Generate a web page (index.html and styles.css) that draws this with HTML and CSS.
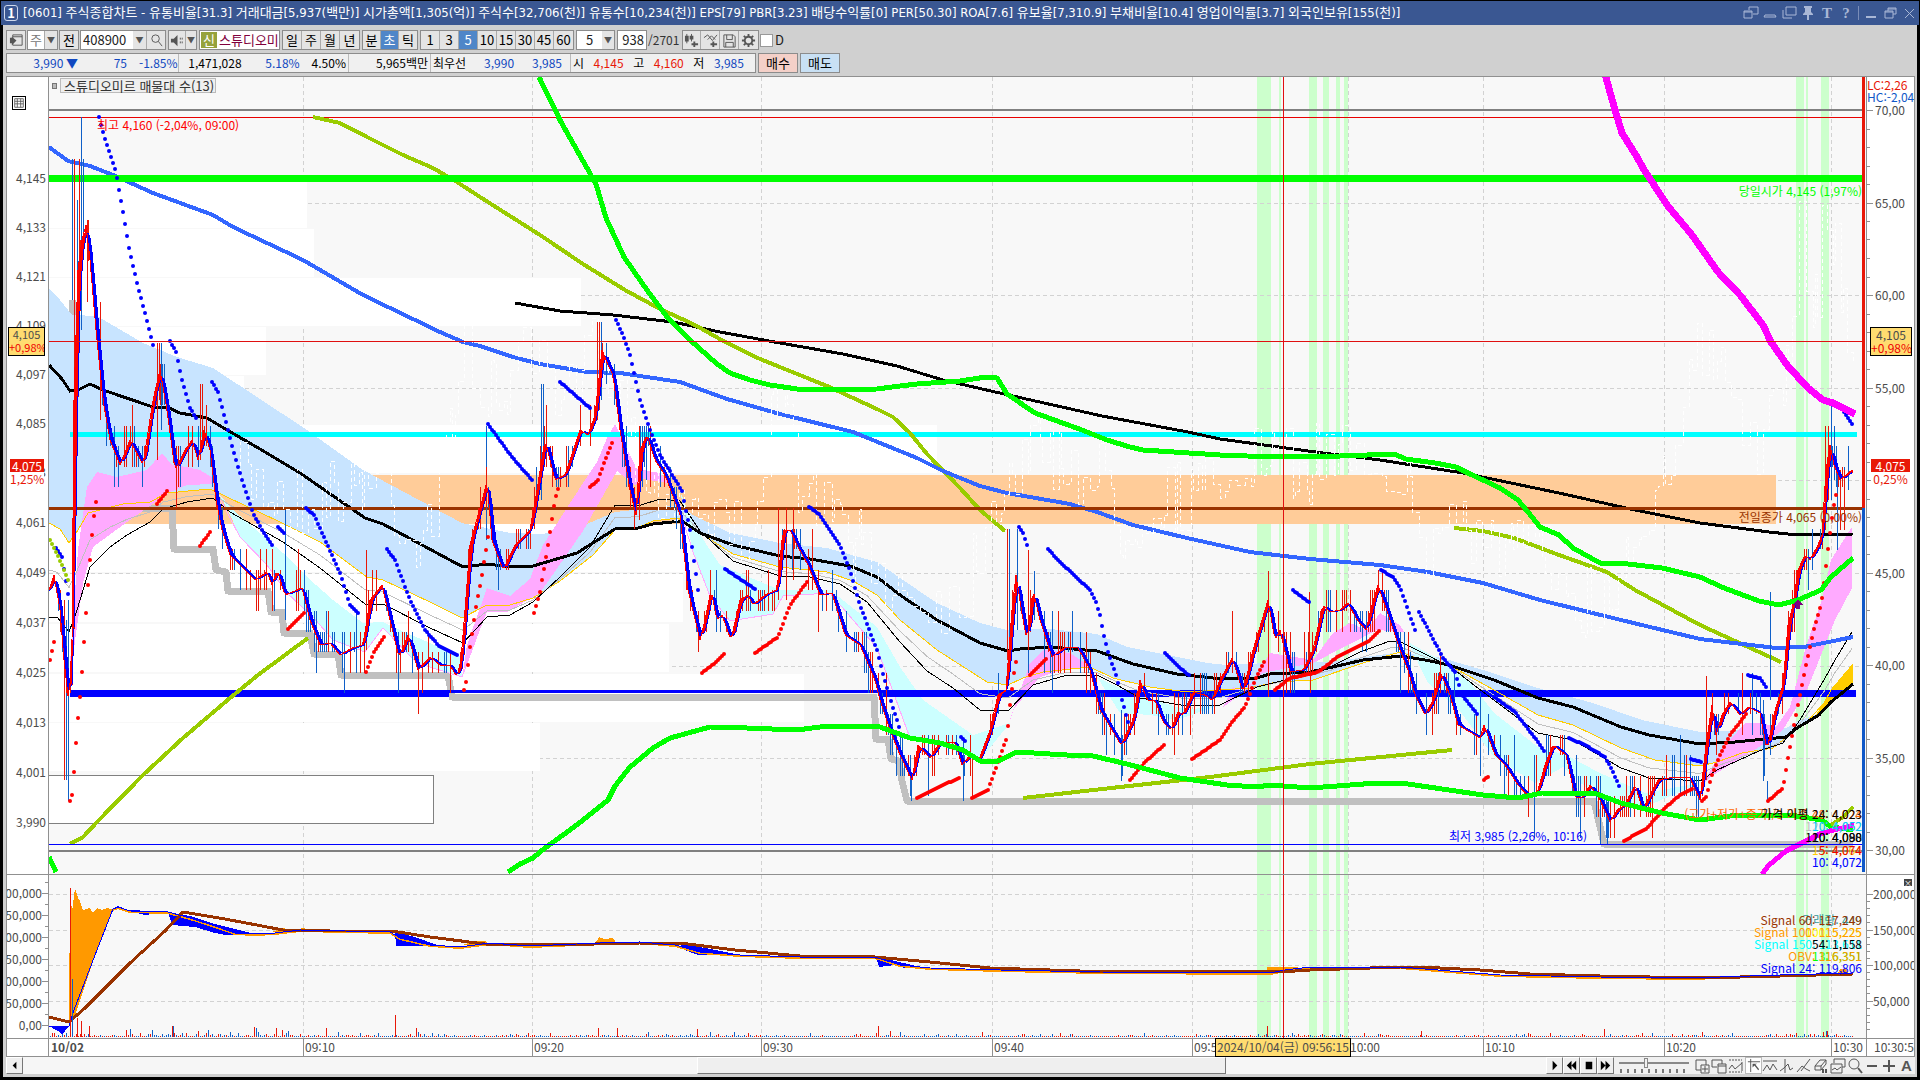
FILE: index.html
```html
<!DOCTYPE html>
<html lang="ko">
<head>
<meta charset="utf-8">
<title>[0601] 주식종합차트</title>
<link rel="stylesheet" href="styles.css">
</head>
<body>
<header class="titlebar">
  <span class="win-no">1</span>
  <h1 class="title">[0601] 주식종합차트 - 유통비율[31.3] 거래대금[5,937(백만)] 시가총액[1,305(억)] 주식수[32,706(천)] 유통수[10,234(천)] EPS[79] PBR[3.23] 배당수익률[0] PER[50.30] ROA[7.6] 유보율[7,310.9] 부채비율[10.4] 영업이익률[3.7] 외국인보유[155(천)]</h1>
  <div class="win-tools">
    <button aria-label="창 분리"><svg viewBox="0 0 16 14"><path d="M6 1h9v7h-5M6 1v3M1 5h8v7H1z M1 6h8"/></svg></button>
    <button aria-label="접기"><svg viewBox="0 0 16 14"><path d="M3 9h10l1 2H2z"/></svg></button>
    <button aria-label="복사"><svg viewBox="0 0 16 14"><path d="M5 1h10v8H5zM2 4v8h9"/></svg></button>
    <button aria-label="고정"><svg viewBox="0 0 16 14"><path class="solid" d="M4 0h8v2h-1v4l2 2v1H9v5H7V9H3V8l2-2V2H4z"/></svg></button>
    <button class="glyph">T</button>
    <button class="glyph">?</button>
    <i class="bar"></i>
    <button aria-label="최소화"><svg viewBox="0 0 16 14"><path class="solid" d="M3 10h10v2H3z"/></svg></button>
    <button aria-label="이전 크기"><svg viewBox="0 0 16 14"><path d="M6 2h8v6h-3M6 2v3M3 5h8v7H3zM3 6h8M6 3h8"/></svg></button>
    <button aria-label="닫기"><svg viewBox="0 0 16 14"><path d="M4 3l9 9M13 3l-9 9"/></svg></button>
  </div>
</header>

<main class="window">
  <div class="toolbar">
    <button class="tb w20" aria-label="목록"><svg viewBox="0 0 16 16"><path d="M4 2h10v11H4zM4 4h10"/><path class="solid" d="M1 5h2v6H1zM3 4l5 4-5 5z"/></svg></button>
    <div class="group"><span class="cell w17 white dim">주</span><button class="cell w12 tri" aria-label="종류">▼</button></div>
    <button class="tb w20">전</button>
    <div class="group"><input class="code" value="408900" aria-label="종목코드"><button class="cell w14 tri" aria-label="종목 목록">▼</button><button class="cell w18" aria-label="검색"><svg viewBox="0 0 16 16"><circle cx="7" cy="6" r="4"/><path d="M10 9l4 5"/></svg></button></div>
    <div class="group"><button class="cell w17" aria-label="소리"><svg viewBox="0 0 16 16"><path class="solid" d="M1 6h3l4-4v12L4 10H1z"/><path d="M11 5v2M11 9v2M13 5v2M13 9v2"/></svg></button><button class="cell w10 tri" aria-label="소리 메뉴">▼</button></div>
    <div class="group name"><span class="badge">신</span><span class="stock">스튜디오미</span></div>
    <div class="group"><button class="cell w19">일</button><button class="cell w19">주</button><button class="cell w19">월</button><button class="cell w19">년</button></div>
    <div class="group"><button class="cell w18">분</button><button class="cell w18 on">초</button><button class="cell w18">틱</button></div>
    <div class="group"><button class="cell w19">1</button><button class="cell w19">3</button><button class="cell w19 on">5</button><button class="cell w19">10</button><button class="cell w19">15</button><button class="cell w19">30</button><button class="cell w19">45</button><button class="cell w19">60</button></div>
    <div class="group"><input class="num" value="5" aria-label="주기"><button class="cell w12 tri" aria-label="주기 목록">▼</button></div>
    <div class="group"><input class="cnt" value="938" aria-label="개수"></div>
    <span class="total">/2701</span>
    <div class="group"><button class="cell w18" aria-label="봉 추가"><svg viewBox="0 0 16 16"><path d="M3 1v10M8 1v8"/><path class="solid" d="M1 3h4v6H1zM6 3h4v4H6z"/><path class="thick" d="M8 12h7M11 9v6"/></svg></button><button class="cell w19" aria-label="지표 추가"><svg viewBox="0 0 16 16"><path d="M1 5l4-3 5 6 5-6M5 7l4-4 4 4"/><path class="thick" d="M8 12h7M11 9v6"/></svg></button><button class="cell w19" aria-label="저장"><svg viewBox="0 0 16 16"><path d="M2 2h10l2 2v11H2zM5 2v5h6V2M4 15v-5h8v5"/></svg></button><button class="cell w19" aria-label="설정"><svg viewBox="0 0 16 16"><circle class="thick" cx="8" cy="8" r="4"/><path class="thick" d="M8 1v3M8 12v3M1 8h3M12 8h3M3 3l2 2M11 11l2 2M13 3l-2 2M5 11l-2 2"/></svg></button></div>
    <label class="chk"><input type="checkbox">D</label>
  </div>

  <div class="quote">
    <div class="quote-box">
      <div class="q q1"><b class="dn">3,990 ▼</b><b class="dn">75</b><b class="dn">-1.85%</b></div>
      <div class="q q2"><b>1,471,028</b><b class="dn">5.18%</b><b>4.50%</b></div>
      <div class="q q3"><b>5,965백만</b></div>
      <div class="q q4"><b>최우선</b><b class="dn">3,990</b><b class="dn">3,985</b></div>
      <div class="q q5"><b>시</b><b class="up">4,145</b><b>고</b><b class="up">4,160</b><b>저</b><b class="dn">3,985</b></div>
    </div>
    <button class="buy">매수</button>
    <button class="sell">매도</button>
  </div>

  <section class="chart">
    <div class="axis-l" id="axisL">
      <button class="grid-btn" aria-label="표"><svg viewBox="0 0 14 14"><path d="M2 2h10v10H2zM2 5h10M2 8h10M5 2v10M9 2v10"/></svg></button>
    </div>
    <div class="plot" id="plotMain">
      <svg id="main" viewBox="49 77 1817 797" preserveAspectRatio="none"></svg>
      <div class="legend"><i></i><span>스튜디오미르 매물대 수(13)</span></div>
    </div>
    <div class="axis-r" id="axisR"><p class="lc">LC:2,26</p><p class="hc">HC:-2,04</p></div>

    <div class="axis-l sub" id="subL"></div>
    <div class="plot sub" id="plotSub"><svg id="vol" viewBox="49 875 1817 163" preserveAspectRatio="none"></svg></div>
    <div class="axis-r sub" id="subR"><button class="close" aria-label="지표 닫기">×</button></div>

    <div class="time-l"></div>
    <div class="time" id="time"></div>
    <div class="time-r">10:30:55</div>
  </section>

  <footer class="bottom">
    <button class="sb" aria-label="왼쪽"><svg viewBox="0 0 16 16"><path class="ink" d="M10 4v8L6 8z"/></svg></button>
    <div class="track"><i class="before"></i><i class="thumb"></i><i class="after"></i></div>
    <button class="sb" aria-label="재생"><svg viewBox="0 0 16 16"><path class="ink" d="M6 3v10l5-5z"/></svg></button>
    <button class="sb" aria-label="뒤로"><svg viewBox="0 0 16 16"><path class="ink" d="M8 3v10L3 8zM13 3v10L8 8z"/></svg></button>
    <button class="sb" aria-label="정지"><svg viewBox="0 0 16 16"><path class="ink" d="M5 4h7v8H5z"/></svg></button>
    <button class="sb" aria-label="앞으로"><svg viewBox="0 0 16 16"><path class="ink" d="M3 3v10l5-5zM8 3v10l5-5z"/></svg></button>
    <div class="speed"><input type="range" value="38" aria-label="속도"><svg viewBox="0 0 70 4" preserveAspectRatio="none"><path d="M2 0v4M9 0v4M16 0v4M23 0v4M30 0v4M37 0v4M44 0v4M51 0v4M58 0v4M65 0v4"/></svg></div>
    <div class="tools">
      <button aria-label="분할 추가"><svg viewBox="0 0 16 16"><path d="M7 12H2V2h10v5M7 7h8v8H7zM11 8v6M8 11h6"/></svg></button>
      <button aria-label="겹치기"><svg viewBox="0 0 16 16"><path d="M6 9H1V2h10v4M7 6h8v9H7zM7 8h8"/></svg></button>
      <button aria-label="구간"><svg viewBox="0 0 16 16"><path stroke-dasharray="2 1" d="M1 2h13M1 14h13"/><path d="M1 11l3-4 3 4 7-6M14 4v9"/></svg></button>
      <button class="sel" aria-label="십자선"><svg viewBox="0 0 16 16"><path d="M2 4h13M5 1v14"/><path class="solid" d="M7 6h5l-2 1 4 5-1 1-4-5-2 2z"/></svg></button>
      <button aria-label="수평"><svg viewBox="0 0 16 16"><path d="M1 3h14M1 13l4-6 3 5 3-6 4 6"/></svg></button>
      <button aria-label="수직"><svg viewBox="0 0 16 16"><path d="M6 1v14M1 13l4-3 4-4 2 6 3-2"/></svg></button>
      <button aria-label="추세선"><svg viewBox="0 0 16 16"><path d="M1 14l5-6 4 3 4 2M5 13L14 1"/></svg></button>
      <button aria-label="지우개"><svg viewBox="0 0 16 16"><path d="M2 8l5-6h6l-5 6zM2 8v4h6V8M8 12l5-6V2"/><path class="thick" d="M10 11v4M13 11v4"/></svg></button>
      <button aria-label="화면 저장"><svg viewBox="0 0 16 16"><path d="M4 5V1h11v8h-3M1 6h11v9H1zM2 12l3-2 2 2 4-3"/></svg></button>
      <button aria-label="돋보기"><svg viewBox="0 0 16 16"><circle cx="7" cy="6" r="5"/><path class="thick" d="M11 10l4 5"/></svg></button>
      <button aria-label="축소"><svg viewBox="0 0 16 16"><path class="thick" d="M3 8h10"/></svg></button>
      <button aria-label="확대"><svg viewBox="0 0 16 16"><path class="thick" d="M2 8h12M8 2v12"/></svg></button>
      <button class="glyph">A</button>
    </div>
  </footer>
</main>
<script src="chart.js"></script>
</body>
</html>
```
FILE: styles.css
```css
* { box-sizing: border-box; }
body {
  margin: 0;
  height: 100vh;
  padding: 1px 1px 3px;
  display: flex;
  flex-direction: column;
  background: #000;
  color: #222;
  font: 13px/16px "Noto Sans CJK KR", sans-serif;
  overflow: hidden;
}
button, input { font: inherit; color: inherit; margin: 0; padding: 0; border: 0; background: none; }
svg { display: block; fill: none; stroke: #555; }
.solid { fill: #555; stroke: none; }
.thick { stroke-width: 2; }
.ink { fill: #000; stroke: none; }

.titlebar { display: flex; align-items: center; height: 24px; padding: 0 2px 0 3px; background: #3a5792; color: #fff; }
.win-no { width: 14px; height: 16px; margin-right: 5px; border: 1px solid #cfd8ec; border-radius: 3px; font-weight: bold; line-height: 14px; text-align: center; }
.title { flex: 1; margin: 0; font: 13px/20px "DejaVu Sans Condensed", "Noto Sans CJK KR", sans-serif; white-space: nowrap; overflow: hidden; }
.win-tools { display: flex; align-items: center; gap: 3px; }
.win-tools button { width: 16px; height: 16px; }
.win-tools svg { width: 16px; height: 14px; stroke: #a9b7d6; }
.win-tools .solid { fill: #a9b7d6; }
.win-tools .glyph { color: #a9b7d6; font: bold 15px/16px "Liberation Serif", serif; }
.win-tools .bar { width: 1px; height: 14px; margin: 0 1px; background: #7a8db8; }

.window { flex: 1; min-height: 0; margin: 0 2px; padding: 5px 2px 3px 3px; display: flex; flex-direction: column; background: #d0d0d0; }
.toolbar { display: flex; height: 20px; gap: 1px; }
.group, .tb { display: flex; height: 20px; border: 1px solid #8c8c8c; background: #e4e4e4; }
.tb, .cell { justify-content: center; align-items: center; text-align: center; color: #000; }
.cell { display: flex; height: 18px; border-right: 1px solid #aaa; }
.cell:last-child { border-right: 0; }
.toolbar svg { width: 15px; height: 15px; }
.group + .group { margin-left: 1px; }
.w10 { width: 10px; } .w12 { width: 12px; } .w14 { width: 14px; } .w17 { width: 17px; } .w18 { width: 18px; } .w19 { width: 19px; } .w20 { width: 20px; }
.white { background: #fff; }
.dim { color: #777; }
.tri { font-size: 8px; color: #555; }
.on { background: #4f86c8; color: #fff; }
.code { width: 52px; padding-left: 2px; background: #fff; }
.name { width: 81px; background: #fff; overflow: hidden; align-items: center; }
.badge { width: 16px; height: 16px; margin: 0 2px 0 1px; background: #96a23c; color: #fff; line-height: 16px; text-align: center; }
.stock { color: #80003c; white-space: nowrap; }
.num { width: 25px; background: #fff; text-align: center; }
.cnt { width: 28px; background: #fff; text-align: right; padding-right: 2px; }
.total { width: 33px; font-size: 12px; line-height: 20px; color: #333; }
.chk { display: flex; align-items: center; gap: 2px; }
.chk input { appearance: none; width: 13px; height: 13px; border: 1px solid #999; background: #fff; }

.quote { display: flex; gap: 2px; height: 20px; margin: 3px 0; font-size: 12px; }
.quote-box { display: flex; border: 1px solid #8c8c8c; background: #f0f0f0; }
.q { display: flex; align-items: center; justify-content: flex-end; padding-right: 2px; border-right: 1px solid #bbb; gap: 12px; }
.q:last-child { border-right: 0; }
.q b { font-weight: normal; color: #000; text-align: right; white-space: nowrap; }
.q .dn { color: #1048c0; }
.q .up { color: #e81808; }
.q1 { width: 172px; } .q1 b { width: 37px; } .q1 b:first-child { width: 50px; }
.q2 { width: 170px; } .q2 b:nth-child(2) { width: 46px; }
.q3 { width: 82px; }
.q4 { width: 140px; justify-content: space-between; padding: 0 8px 0 2px; }
.q5 { width: 184px; justify-content: space-between; padding: 0 11px 0 2px; gap: 0; }
.buy, .sell { width: 40px; border: 1px solid #8c8c8c; color: #000; font-size: 13px; }
.buy { background: #f4d0c8; }
.sell { background: #c8e0f4; }

.chart {
  flex: 1;
  min-height: 0;
  display: grid;
  grid-template-columns: 42px minmax(0, 1fr) 48px;
  grid-template-rows: minmax(0, 1fr) 164px 19px;
  border: 1px solid #909090;
  border-bottom: 0;
  background: #fff;
  color: #4c4c4c;
  font-size: 12px;
}
.axis-l, .axis-r, .plot { position: relative; overflow: hidden; }
.axis-l { border-right: 1px solid #909090; }
.axis-r { border-left: 1px solid #909090; }
.plot { background: #f8f8f8; }
.plot svg { position: absolute; inset: 0; width: 100%; height: 100%; shape-rendering: crispEdges; }
.plot path { vector-effect: non-scaling-stroke; }
.sub { border-top: 1px solid #909090; }
.lab { position: absolute; transform: translateY(-50%); white-space: nowrap; }
.axis-l .lab { right: 2px; }
.axis-r .lab { left: 8px; }
.sub.axis-l .lab { right: 6px; }
.sub.axis-r .lab { left: 6px; }
.tick { position: absolute; height: 1px; width: 3px; background: #909090; }
.tick.big { width: 6px; }
.axis-l .tick { right: 0; }
.axis-r .tick { left: 0; }
.lc, .hc { margin: 0; line-height: 12px; white-space: nowrap; }
.lc { padding-top: 2px; color: #e81808; }
.hc { color: #1058c8; }
.tag { position: absolute; left: 1px; width: 37px; height: 29px; border: 1px solid #000; background: #ffdc70; line-height: 13px; text-align: center; overflow: hidden; font-size: 11px; }
.axis-r .tag { left: 3px; width: 42px; font-size: 12px; }
.tag em, .now em { display: block; font-style: normal; color: #e00; }
.now { position: absolute; left: 3px; width: 34px; line-height: 13px; text-align: center; background: #fff; }
.now span { display: block; background: #e81808; color: #fff; }
.now em { color: #e81808; }
.axis-r .now { left: 4px; width: 39px; }
.grid-btn { position: absolute; left: 5px; top: 19px; width: 14px; height: 14px; border: 1px solid #000; }
.grid-btn svg { width: 12px; height: 12px; }
.legend { position: absolute; left: 3px; top: 1px; display: flex; align-items: center; gap: 3px; color: #333; font-size: 13px; }
.legend i { width: 5px; height: 6px; border: 1px solid #777; background: #bbb; }
.legend span { width: 156px; height: 15px; padding-left: 3px; border: 1px solid #bbb; background: #efefef; line-height: 13px; white-space: nowrap; }
.close { position: absolute; right: 2px; top: 4px; width: 8px; height: 7px; background: #444; color: #fff; font-size: 8px; line-height: 7px; }
.time-l, .time, .time-r { border-top: 1px solid #909090; border-bottom: 1px solid #909090; line-height: 15px; }
.time-l { border-right: 1px solid #909090; }
.time { position: relative; }
.time span { position: absolute; top: 0; height: 17px; padding-left: 1px; border-left: 1px solid #909090; white-space: nowrap; }
.time .day { font-weight: bold; border-left: 0; padding-left: 2px; }
.time .cursor { top: -1px; width: 136px; height: 19px; padding: 0; border: 1px solid #000; background: #ffdc70; text-align: center; }
.time-r { border-left: 1px solid #909090; padding-left: 7px; overflow: hidden; white-space: nowrap; }

.bottom { display: flex; height: 17px; background: #f0f0f0; }
.sb { width: 17px; height: 17px; border: 1px solid; border-color: #fff #777 #777 #fff; background: #efefef; }
.sb svg { width: 15px; height: 15px; }
.track { flex: 1; display: flex; background: #f6f6f6; }
.before { flex: 674; } .thumb { flex: 528; border: 1px solid; border-color: #fff #777 #777 #fff; background: #efefef; } .after { flex: 320; }
.speed { width: 80px; padding: 0 5px; }
.speed input { display: block; width: 70px; height: 11px; appearance: none; background: linear-gradient(#888, #888) 0 5px / 100% 2px no-repeat; }
.speed input::-webkit-slider-thumb { appearance: none; width: 4px; height: 10px; border: 1px solid #888; background: #f0f0f0; }
.speed svg { width: 70px; height: 4px; margin-top: 1px; stroke: #000; }
.tools { display: flex; }
.tools button { width: 17px; height: 17px; }
.tools svg { width: 16px; height: 16px; }
.tools .sel { background: #fff; border: 1px solid #bbb; }
.tools .sel svg { width: 15px; height: 15px; }
.tools .glyph { font: bold 15px/16px "Liberation Sans", sans-serif; color: #555; }

.note { position: absolute; transform: translateY(-50%); white-space: nowrap; }
.note.r { right: 4px; }
```
FILE: chart.js
```js
const NS = 'http://www.w3.org/2000/svg';
const main = document.getElementById('main');
const vol = document.getElementById('vol');
let seed = 7;
const rnd = () => (seed = (seed * 16807) % 2147483647) / 2147483647;

const pts = s => s.trim().split(/\s+/).map(p => p.split(',').map(Number));
const toPath = a => 'M' + a.map(p => p.join(' ')).join('L');
function path(svg, d, stroke, w, fill, extra) {
  const e = document.createElementNS(NS, 'path');
  e.setAttribute('d', d);
  e.setAttribute('stroke', stroke || 'none');
  e.setAttribute('stroke-width', w || 1);
  e.setAttribute('fill', fill || 'none');
  for (const k in extra) e.setAttribute(k, extra[k]);
  svg.appendChild(e);
}
const line = (svg, s, c, w) => path(svg, toPath(pts(s)), c, w, null, { 'stroke-linejoin': 'round' });
const area = (svg, s, c) => path(svg, toPath(pts(s)) + 'Z', null, 0, c);
const rect = (svg, x1, y1, x2, y2, c) => path(svg, `M${x1} ${y1}H${x2}V${y2}H${x1}Z`, null, 0, c);
function at(a, x) {
  if (x <= a[0][0]) return a[0][1];
  for (let i = 1; i < a.length; i++) {
    if (x <= a[i][0]) {
      const [x0, y0] = a[i - 1], [x1, y1] = a[i];
      return y0 + (y1 - y0) * (x - x0) / ((x1 - x0) || 1);
    }
  }
  return a[a.length - 1][1];
}

const hours = [[303, '09:10'], [532, '09:20'], [761, '09:30'], [992, '09:40'], [1192, '09:50'], [1348, '10:00'], [1483, '10:10'], [1664, '10:20'], [1831, '10:30']];
const bands = [[1257, 1271], [1279, 1281], [1309, 1317], [1323, 1329], [1336, 1340], [1344, 1348], [1796, 1804], [1806, 1808], [1821, 1829]];

/* background: volume profile, signal bands, grid */
const dash = { 'stroke-dasharray': '4 3' };
for (const [svg, y1, y2] of [[main, 77, 874], [vol, 875, 1038]]) {
  bands.forEach(b => rect(svg, b[0], y1, b[1], y2, '#ccffcc'));
  hours.forEach(h => path(svg, `M${h[0]} ${y1}V${y2}`, '#d2d2d2', 1, null, dash));
}
[203, 295, 388, 480, 573, 666, 758].forEach(y => path(main, `M49 ${y}H1862`, '#d2d2d2', 1, null, dash));
[894, 930, 965, 1001].forEach(y => path(vol, `M49 ${y}H1862`, '#d2d2d2', 1, null, dash));
[[180, 307], [229, 314], [278, 581], [327, 266], [376, 244], [425, 937], [524, 690], [574, 683], [624, 669], [674, 804], [723, 540]]
  .forEach(r => rect(main, 49, r[0], r[1], r[0] + 48, '#fff'));
rect(main, 49, 475, 1776, 524, '#ffcc99');
path(main, 'M49 775H433V823H49', '#808080', 1, '#fff');

/* step support line */
line(main, '72,300 72,363 88,363 88,430 95,447 97,489 114,489 117,508 172,508 174,549 213,549 216,570 226,572 228,591 268,591 271,612 282,612 284,633 310,633 314,654 338,654 341,675 448,675 452,697 874,697 876,739 888,739 891,759 899,761 902,781 907,801 1594,801 1598,818 1604,844 1853,844', '#c0c0c0', 7);

/* clouds */
const black = pts('49,365 62,379 70,391 80,389 90,384 103,390 153,407 167,407 180,413 207,418 227,430 260,449 300,473 365,518 383,524 463,567 487,564 503,566 533,566 577,553 615,529 638,528 653,524 682,521 700,533 733,545 780,556 810,559 850,566 877,577 900,595 937,620 980,643 1008,651 1020,649 1050,647 1097,651 1133,664 1177,674 1213,678 1257,678 1270,674 1310,672 1333,667 1363,660 1401,656 1425,660 1449,665 1494,680 1538,698 1573,707 1621,727 1649,735 1700,744 1735,742 1786,737 1797,728 1819,715 1831,702 1853,684');
const gold = pts('49,523 60,529 69,543 78,530 88,513 123,504 150,502 167,493 210,489 227,497 280,522 320,542 367,577 383,580 430,602 462,618 487,605 510,605 533,598 560,581 593,555 615,530 637,528 653,521 678,518 700,533 733,554 780,567 827,572 853,581 877,595 900,620 937,650 987,682 1008,685 1023,678 1043,672 1090,667 1113,678 1150,687 1187,692 1220,690 1250,688 1277,682 1313,680 1363,663 1400,652 1414,657 1449,665 1494,690 1538,715 1573,725 1621,748 1655,760 1700,766 1717,762 1742,753 1773,748 1793,732 1807,722 1824,703 1831,690 1853,664');
const thin = pts('49,617 57,617 69,632 77,610 90,567 110,547 127,535 150,522 163,509 187,502 213,498 230,512 283,542 320,568 365,604 383,604 430,628 463,643 487,617 510,615 533,602 560,577 590,547 615,505 638,506 660,499 680,501 700,531 733,561 780,576 810,577 840,584 867,602 900,642 927,671 953,688 980,710 1008,711 1033,685 1067,675 1097,675 1117,685 1140,698 1187,706 1220,705 1257,687 1293,678 1330,667 1360,652 1390,641 1401,642 1421,652 1452,668 1483,692 1538,733 1573,740 1621,768 1649,778 1700,781 1717,770 1759,751 1783,743 1800,720 1824,680 1835,660 1852,632');
const cloudTop = pts('49,288 60,300 72,315 97,316 143,343 177,357 213,368 307,430 363,470 462,523 510,533 543,534 587,524 615,512 680,505 693,515 730,533 780,543 827,548 877,562 900,578 937,603 980,623 1007,630 1050,629 1097,634 1127,647 1207,663 1227,665 1267,663 1330,662 1400,652 1442,658 1483,670 1538,688 1593,703 1642,720 1700,732 1745,730 1786,728 1800,720 1819,714');
path(main, toPath(cloudTop.concat(gold.filter(p => p[0] < 1820).reverse())) + 'Z', null, 0, '#c8e4ff');
area(main, '1815,716 1824,703 1831,690 1853,664 1853,684 1831,702 1819,715', '#ffcc00');
['70,663 78,550 87,487 97,472 117,477 147,470 162,453 172,465 187,467 200,470 213,478 212,484 187,485 170,492 127,522 93,547 83,583 72,663',
 '463,672 467,645 487,588 510,596 530,579 543,545 583,483 597,462 607,438 615,424 637,469 660,473 677,493 667,483 643,479 635,485 617,471 583,531 540,593 507,612 487,612',
 '1010,720 1030,663 1043,650 1070,653 1093,668 1070,668 1040,677 1013,710',
 '1223,707 1233,687 1247,693 1270,653 1313,660 1333,633 1350,623 1367,630 1380,613 1400,625 1404,632 1377,630 1313,663 1263,673 1233,700',
 '1704,783 1721,750 1745,723 1762,723 1776,727 1790,707 1807,643 1821,603 1831,560 1852,527 1852,588 1835,620 1807,690 1783,730 1759,747 1710,777'
].forEach(s => area(main, s, '#ffaaff'));
['218,493 233,510 283,553 307,577 333,600 363,623 383,622 400,630 430,643 462,657 462,677 417,663 383,628 365,652 333,640 313,617 287,593 267,565 240,537 227,508',
 '680,491 693,524 720,565 780,590 830,590 877,627 900,667 923,700 973,735 1010,723 980,760 953,750 910,738 877,648 830,593 783,596 773,614 730,621 710,596 693,552',
 '1097,677 1130,693 1187,710 1220,705 1177,720 1150,715 1120,713',
 '1408,642 1449,665 1470,682 1494,713 1538,747 1566,755 1600,773 1645,793 1700,783 1645,807 1600,800 1563,767 1535,783 1494,757 1459,710 1428,683'
].forEach(s => area(main, s, '#ccffff'));
line(main, '218,495 240,537 267,565 287,593 313,617 333,640 365,652 383,628 417,663 462,677 483,620', '#ffaaff', 1);
line(main, '683,520 693,552 710,596 730,621 773,614 783,596 830,593 877,648 910,738 960,747', '#ffaaff', 1);

/* price levels */
path(main, 'M49 109.5H1862', '#808080', 2);
path(main, 'M49 850.5H1862', '#808080', 2);
path(main, 'M49 117.5H1862', '#e80000', 1);
path(main, 'M70 434.5H1857', '#00ffff', 5);
path(main, 'M70 693.5H449', '#0000ff', 7);
path(main, 'M449 691.5H882', '#0000ff', 3);
path(main, 'M881 693.5H1856', '#0000ff', 7);

/* moving averages */
path(main, toPath(gold), '#ffcc00', 1);
path(main, toPath(thin.map(p => [p[0], (p[1] + at(gold, p[0])) / 2])), '#c0c0c0', 1);
path(main, toPath(thin), '#000', 1);
path(main, toPath(black), '#000', 3);
line(main, '515,303 560,311 613,315 673,322 720,332 780,343 843,354 897,366 943,380 1004,394 1102,416 1188,432 1220,439 1323,453 1380,460 1463,473 1559,493 1635,510 1700,523 1769,532 1797,535 1853,534', '#000', 3);
const olive = '#99cc00';
line(main, '313,117 340,123 367,137 403,155 433,168 457,182 480,197 540,235 583,264 625,290 660,309 693,324 727,343 760,359 827,386 877,409 893,417 910,433 927,454 960,488 980,510 1005,531', olive, 4);
line(main, '70,844 83,837 97,822 143,775 183,738 230,698 258,675 308,638', olive, 4);
line(main, '1023,798 1120,787 1210,777 1310,764 1401,755 1452,750', olive, 4);
line(main, '1454,528 1483,531 1514,538 1559,555 1607,572 1635,590 1700,625 1735,641 1781,662', olive, 4);
line(main, '49,147 68,161 90,166 113,175 153,193 213,215 233,227 303,260 363,295 440,332 463,342 480,346 513,357 540,364 587,372 620,373 680,382 727,399 780,414 853,432 917,458 943,471 980,486 1007,493 1070,504 1097,512 1133,525 1187,538 1250,552 1310,559 1380,565 1428,572 1483,583 1540,600 1621,620 1700,639 1776,648 1804,647 1853,637', '#3366ff', 4);
path(main, 'M49 178.5H1862', '#00ff00', 7);
path(main, 'M49 508.5H1862', '#993300', 3);

/* wandering white overlay */
const wc = pts('49,430 60,520 250,480 300,500 380,470 410,540 440,500 465,340 490,400 530,360 560,420 600,330 640,470 680,490 740,540 780,400 800,480 840,530 900,590 960,600 990,500 1030,440 1100,480 1120,530 1150,500 1210,490 1240,460 1300,470 1350,440 1400,470 1430,560 1450,500 1480,540 1540,560 1600,610 1650,500 1700,350 1720,380 1760,440 1780,420 1800,230 1815,300 1825,190 1850,350');
let wd = 'M49 430';
for (let x = 240; x < 1855; x += 2 + Math.floor(rnd() * 7)) {
  wd += (x === 240 ? 'M240 480' : `H${x}`) + `V${Math.round(at(wc, x) + (rnd() - 0.5) * 80)}`;
}
path(main, wd, '#fff', 1, null, { 'stroke-dasharray': '4 3' });

/* candles and the two fast averages */
const price = pts('49,590 54,575 60,610 64,660 69,705 72,640 74,400 78,270 82,240 86,225 90,260 96,330 103,400 110,440 120,465 130,440 143,465 153,400 160,370 167,410 175,470 185,450 192,440 198,460 204,430 210,450 216,500 222,530 230,555 245,570 255,580 267,572 272,585 277,570 285,595 302,588 310,620 320,645 330,643 340,655 352,648 363,645 370,600 382,585 390,620 399,657 408,635 418,670 430,657 440,665 450,665 457,677 461,660 465,610 470,545 478,515 485,490 487,480 492,540 503,570 515,545 530,530 537,490 545,440 555,480 565,475 580,430 588,435 595,415 602,350 608,365 613,375 620,430 630,490 636,515 640,450 647,435 655,460 665,475 680,515 688,590 700,640 705,620 711,590 717,620 722,615 731,640 740,600 748,595 753,605 765,595 777,590 783,530 790,530 797,545 808,565 820,595 832,593 845,635 860,645 875,680 880,700 890,730 900,755 912,780 918,745 930,758 940,742 955,742 962,765 970,755 978,762 990,730 998,695 1006,690 1012,610 1016,575 1023,620 1027,640 1033,590 1040,620 1052,657 1065,647 1078,648 1090,670 1100,710 1112,730 1121,745 1133,720 1140,680 1147,700 1155,700 1163,722 1171,730 1178,712 1183,715 1193,692 1205,695 1212,700 1220,680 1232,658 1243,692 1253,650 1268,600 1275,640 1280,630 1290,672 1303,670 1313,650 1323,605 1330,612 1340,610 1348,603 1357,620 1366,630 1372,605 1378,585 1390,620 1400,650 1408,670 1415,695 1425,715 1433,700 1440,672 1450,695 1458,725 1470,732 1480,738 1484,725 1495,755 1505,765 1518,785 1530,798 1538,790 1545,765 1553,745 1566,755 1575,797 1583,797 1590,785 1600,800 1610,822 1617,810 1625,805 1635,785 1643,810 1650,795 1658,780 1675,777 1690,778 1700,800 1706,745 1712,705 1716,735 1722,715 1730,702 1740,715 1748,707 1760,713 1767,750 1775,710 1783,685 1788,625 1793,605 1798,570 1805,555 1810,560 1818,545 1822,535 1826,470 1830,445 1834,465 1840,480 1846,475 1852,470');
const slow = x => (at(price, x - 1) + at(price, x - 3) + at(price, x - 5)) / 3;
const red = '#ff0000', blue = '#0000ff', candleRed = '#e81808', candleBlue = '#1060c8';
const step = 20.6;
let cr = '', cb = '', fr = '', fb = '', sl = 'M49 590', fs = 'M49 590';
for (let x = 50; x < 1854; x += 2) {
  const y = at(price, x), s = slow(x);
  if (rnd() < 0.55) {
    let top = 508 + step * Math.floor((y - rnd() * 8 - 508) / step);
    let bot = 508 + step * Math.ceil((y + rnd() * 8 - 508) / step);
    if (rnd() < 0.07) top -= step;
    if (rnd() < 0.1) bot += step;
    const d = `M${x}.5 ${Math.round(top)}V${Math.round(bot)}`;
    if (rnd() < (s > y ? 0.8 : 0.35)) cr += d; else cb += d;
  }
  if (y < s - 1) fr += `M${x} ${y}V${s}`; else if (y > s + 1) fb += `M${x} ${y}V${s}`;
  sl += `L${x} ${s}`;
  fs += `L${x} ${y}`;
}
[[72,159,300,0],[74,159,500,1],[77,200,450,0],[81,117,330,0],[83,159,260,0],[79,159,300,1],[87,220,302,1],[100,302,420,1],[64,600,780,1],[66,620,780,0],[68,600,801,0],[157,343,460,1],[159,343,400,1],[161,343,430,0],[200,384,460,1],[202,384,440,1],[285,510,620,0],[366,550,650,1],[486,426,540,0],[541,384,500,0],[543,384,470,0],[597,322,420,1],[599,322,410,1],[601,322,400,0],[639,426,520,1],[646,426,480,0],[778,508,600,1],[786,508,600,1],[793,508,580,1],[1007,529,660,1],[1009,529,680,0],[1017,529,630,0],[1028,550,650,1],[1034,571,620,0],[1268,571,697,1],[1309,592,660,1],[1370,592,630,1],[1770,592,700,0],[1706,676,780,1],[1763,700,781,0],[1767,781,801,0],[1121,710,781,0],[963,740,801,0],[911,780,801,0],[1600,802,844,0],[1607,802,844,0],[1831,405,500,0],[1825,426,530,1],[1828,426,500,1],[1834,426,480,0],[1848,446,490,0],[1844,470,530,1],[1840,470,530,1],[1837,470,550,0]]
  .forEach(([x, a, b, up]) => { const d = `M${x}.5 ${a}V${b}`; if (up) cr += d; else cb += d; });
path(main, cb, candleBlue, 1);
path(main, cr, candleRed, 1);
path(main, fb, blue, 2);
path(main, fr, red, 2);
path(main, sl, blue, 1);
path(main, fs, red, 1);

/* parabolic stop dots, one every bar */
function dots(list, c) {
  let d = '';
  list.split('|').forEach(s => {
    const a = pts(s);
    for (let x = a[0][0]; x <= a[a.length - 1][0]; x += 2) d += `M${x} ${Math.round(at(a, x))}h.01`;
  });
  path(main, d, c, 4, null, { 'stroke-linecap': 'round', 'shape-rendering': 'auto' });
}
dots('99,117 104,136 116,172 118,184 124,218 129,248 137,283 145,313 153,345|170,341 176,352 182,380 190,408 197,420|212,382 218,392 226,422 233,450 243,483 253,513 262,530 273,547|278,527 284,533|306,508 314,515 340,573 350,605 359,614|387,549 395,560 410,600 425,630 440,647 458,655|488,424 512,457 532,480|560,382 590,408|616,320 623,335 630,355 640,400 650,430 660,455 682,491 690,530 693,555 697,580 699,600|725,569 740,579 755,589|809,507 820,515 840,545 850,570 860,605 873,640 877,650 882,670 890,698 900,730|961,737 966,742|1019,527 1023,533 1028,548|1048,549 1060,562 1090,590 1096,602 1100,615 1103,632 1108,652 1116,675 1122,700 1128,722|1165,653 1180,668 1190,676|1293,590 1309,602|1381,570 1393,577 1400,587 1408,610 1415,630|1419,612 1430,633 1443,658 1455,672 1462,695 1478,715|1494,697 1515,712 1535,738 1545,752|1569,738 1585,745 1605,757 1612,770 1620,788|1691,759 1702,762|1748,675 1760,678 1767,688|1844,412 1853,425|56,548 62,557 65,575 68,594', '#0000ff');
dots('70,801 72,795 74,772 77,728 81,687 83,656 87,598 91,547 93,523 96,502|50,660 54,642|157,504 168,490|200,546 210,532|288,629 304,613|366,672 375,650 385,635|464,690 466,682 470,647 476,607 482,575 488,537|534,613 540,592 548,545 555,500 559,485|590,487 598,480 605,460 613,440|702,673 715,663 725,653|755,653 778,637 790,605 807,582|917,798 940,786 960,778|972,798 988,790 997,765 1007,737 1010,705 1015,665 1017,658|1030,675 1047,658|1130,780 1145,762 1164,745|1192,759 1220,740 1232,722 1245,707 1255,680 1265,660|1275,690 1290,678 1318,672 1340,655 1370,640 1380,630|1484,780 1489,776|1624,841 1647,828 1665,808 1680,795 1692,789|1702,801 1706,797 1712,775 1720,755 1730,735 1747,713|1768,801 1783,788 1789,752 1795,720 1801,690 1807,660 1815,625 1821,605 1825,575 1829,540 1833,510 1836,495', '#ff0000');
dots('50,540 56,552 62,565 69,582', olive);

/* outer bands */
line(main, '539,77 561,122 596,184 606,218 624,257 649,293 668,318 690,340 717,364 730,373 750,380 770,385 797,389 827,390 877,389 900,386 917,384 960,381 986,377 997,378 1007,394 1035,413 1082,430 1107,440 1130,447 1143,450 1220,455 1247,456 1313,457 1367,455 1394,454 1406,459 1435,463 1456,467 1470,474 1483,480 1500,488 1518,500 1528,512 1540,527 1559,535 1573,548 1600,563 1628,564 1662,568 1700,577 1724,588 1759,601 1779,605 1798,600 1821,590 1831,577 1853,558', '#00ff00', 5);
line(main, '49,857 56,872', '#00ff00', 5);
line(main, '508,872 520,864 533,858 545,848 570,830 583,820 608,800 615,786 630,767 653,748 670,738 710,727 747,728 797,730 820,727 853,726 880,727 910,738 940,743 963,750 980,761 998,761 1017,752 1067,755 1093,756 1127,764 1180,778 1227,785 1257,787 1270,785 1310,788 1377,783 1401,783 1449,790 1483,795 1518,798 1542,793 1597,794 1621,803 1662,813 1700,820 1738,815 1790,815 1822,820 1831,827 1853,830', '#00ff00', 5);
line(main, '1831,825 1843,817 1853,807', olive, 4);
line(main, '1605,74 1615,110 1622,133 1637,157 1643,168 1667,205 1692,235 1718,272 1740,295 1763,325 1771,342 1787,365 1808,388 1823,400 1833,403 1855,414', '#ff00ff', 7);
line(main, '1762,874 1769,865 1786,851 1802,843 1822,833 1854,825', '#ff00ff', 5);
area(main, '1798,599 1803,605 1800,605 1800,609 1796,609 1796,605 1793,605', '#800080');
path(main, 'M49 844.5H1862', '#0000ff', 1);
rect(main, 1862, 77, 1865, 508, '#e81808');
rect(main, 1862, 508, 1865, 872, '#1058c8');
path(main, 'M49 341.5H1862M1283.5 77V874', '#e01010', 1);

/* lower panel */
const orange = '#ff9900';
let vr = '', vb = '';
for (let x = 50; x < 1854; x += 2) {
  const early = x < 300 ? 2 : 1, h = 1 + Math.floor(rnd() * rnd() * rnd() * 6 * early);
  const d = `M${x}.5 1037V${1037 - h}`;
  if (rnd() < 0.5) vr += d; else vb += d;
}
[[77,1018],[81,1021],[89,1026],[172,1026],[254,1027],[326,1028],[395,1015],[416,1028],[598,1028],[617,1028],[697,1029],[878,1026],[890,1031],[982,1032],[1267,1026],[1421,1031],[1604,1029],[1702,1032],[1823,1032],[1827,1031]].forEach(v => vr += `M${v[0]}.5 1037V${v[1]}`);
[[173,1026],[256,1028],[418,1032],[900,1032],[1826,1031]].forEach(v => vb += `M${v[0]}.5 1037V${v[1]}`);
path(vol, vb, candleBlue, 1);
path(vol, vr, candleRed, 1);
area(vol, '69,1022 70,888 72,912 75,888 78,898 80,901 83,910 90,908 93,913 97,908 102,910 107,908 113,910 97,950 75,1015', orange);
['595,944 599,937 604,939 613,938 617,944', '272,932 283,928 290,930 304,928 315,932', '1266,974 1267,967 1290,967 1305,968 1285,973', '462,945 475,941 485,941 490,945', '1838,973 1840,969 1846,969 1848,973'].forEach(s => area(vol, s, orange));
['49,1026 58,1031 62,1035 69,1026', '113,909 118,906 130,911 145,915 168,912', '168,912 172,925 195,927 215,933 225,935 255,934 215,924 190,916', '395,932 396,946 420,946 440,946 415,937', '680,944 685,950 698,955 740,955 705,948', '876,957 879,967 895,965 905,968 925,968 895,961'].forEach(s => area(vol, s, '#0000ff'));
const obv = pts('49,1026 69,1026 74,1010 97,950 113,909 118,907 130,911 168,912 190,918 215,926 235,933 255,934 275,933 300,930 390,932 400,938 430,945 460,947 490,943 530,946 600,943 640,942 675,945 700,952 740,955 800,957 875,957 900,965 930,968 1000,970 1100,972 1270,973 1285,970 1310,967 1400,967 1450,971 1500,975 1600,977 1690,978 1780,975 1853,973');
path(vol, toPath(obv.slice(4).map(p => [p[0], p[1] + 1])), orange, 2);
line(vol, '49,1017 69,1022 85,1008 105,988 130,963 165,931 183,912 225,919 283,930 330,931 392,931 430,937 485,944 550,945 640,943 680,943 735,950 800,956 875,957 930,962 990,968 1080,971 1280,972 1310,970 1340,969 1400,967 1440,968 1480,970 1530,974 1600,976 1700,978 1780,976 1853,974', '#993300', 3);
path(vol, toPath(obv), '#0000ff', 1);
path(vol, 'M70.5 888V1037', candleRed, 1);
path(vol, 'M72.5 979V1037', candleBlue, 1);
path(vol, 'M1283.5 875V1038', '#e01010', 1);

/* text labels; positions are shares of the panel they belong to */
const yMain = y => (y - 77) / 797 * 100 + '%';
const ySub = y => (y - 875) / 163 * 100 + '%';
const xPlot = x => (x - 49) / 1817 * 100 + '%';
function add(id, cls, top, html) {
  const e = document.createElement('span');
  e.className = cls;
  e.style.top = top;
  e.innerHTML = html || '';
  document.getElementById(id).appendChild(e);
  return e;
}
[['4,145', 178], ['4,133', 227], ['4,121', 276], ['4,109', 325], ['4,097', 374], ['4,085', 423], ['4,073', 472], ['4,061', 522], ['4,049', 572], ['4,037', 622], ['4,025', 672], ['4,013', 722], ['4,001', 772], ['3,990', 822]]
  .forEach(l => add('axisL', 'lab', yMain(l[1]), l[0]));
for (let i = 0; i < 9; i++) {
  const y = 110 + i * 92.5;
  if (i !== 4) add('axisR', 'lab', yMain(y), `${70 - i * 5},00`);
  add('axisR', 'tick big', yMain(y));
  if (i < 8) for (let k = 1; k < 5; k++) add('axisR', 'tick', yMain(y + k * 18.5));
}
['00,000', '50,000', '00,000', '50,000', '00,000', '50,000', '0,00'].forEach((t, i) => {
  add('subL', 'lab', ySub(893 + i * 22), t);
  add('subL', 'tick big', ySub(893 + i * 22));
  add('subL', 'tick', ySub(882 + i * 22));
});
['200,000', '150,000', '100,000', '50,000'].forEach((t, i) => {
  add('subR', 'lab', ySub(894 + i * 35.7), t);
  add('subR', 'tick big', ySub(894 + i * 35.7));
  for (let k = 1; k < 5; k++) add('subR', 'tick', ySub(894 + i * 35.7 + k * 7));
});
for (const id of ['axisL', 'axisR']) {
  add(id, 'tag', yMain(327), '4,105<em>+0,98%</em>');
  add(id, 'now', yMain(459), `<span>4,075</span><em>${id === 'axisL' ? '1,25%' : '0,25%'}</em>`);
}
function note(id, top, color, text, x) {
  const e = add(id, x ? 'note' : 'note r', top, text);
  e.style.color = color;
  if (x) e.style.left = xPlot(x);
}
note('plotMain', yMain(125), '#ff0000', '최고 4,160 (-2,04%, 09:00)', 97);
note('plotMain', yMain(836), '#0000ff', '최저 3,985 (2,26%, 10:16)', 1449);
note('plotMain', yMain(191), '#00ff00', '당일시가 4,145 (1,97%)');
note('plotMain', yMain(517), '#993300', '전일종가 4,065 (0,00%)');
[[814, '#ff6600', '(고가+저가+종가)/3 가중 48: 4,024'], [814, '#000', '가격 이평 24: 4,023'], [826, '#c0c0c0', '120: 4,052'], [826, '#00ccff', '10: 4,052'], [837, '#000', '120: 4,088'], [837, '#000', '10: 4,090'], [850, '#ffcc00', '15: 4,064'], [850, '#e00', '5: 4,074'], [862, '#c8e4ff', '30: 4,072'], [862, '#0000ff', '10: 4,072']]
  .forEach(n => note('plotMain', yMain(n[0]), n[1], n[2]));
[[920, '#339999', '거래량: 449'], [920, '#993300', 'Signal 60: 117,249'], [932, '#ffff00', '100: 5,225'], [932, '#ff9900', 'Signal 100: 115,225'], [944, '#00ffff', 'Signal 150: 113,611'], [944, '#000', '54: 1,158'], [956, '#00ff00', '13: 6,351'], [956, '#ff9900', 'OBV: 116,351'], [968, '#0000ff', 'Signal 24: 119,806']]
  .forEach(n => note('plotSub', ySub(n[0]), n[1], n[2]));

add('time', 'day', 0, '10/02').style.left = 0;
hours.forEach(h => add('time', '', 0, h[1]).style.left = xPlot(h[0]));
const cur = add('time', 'cursor', '-1px', '2024/10/04(금) 09:56:15');
cur.style.left = xPlot(1215);
```
